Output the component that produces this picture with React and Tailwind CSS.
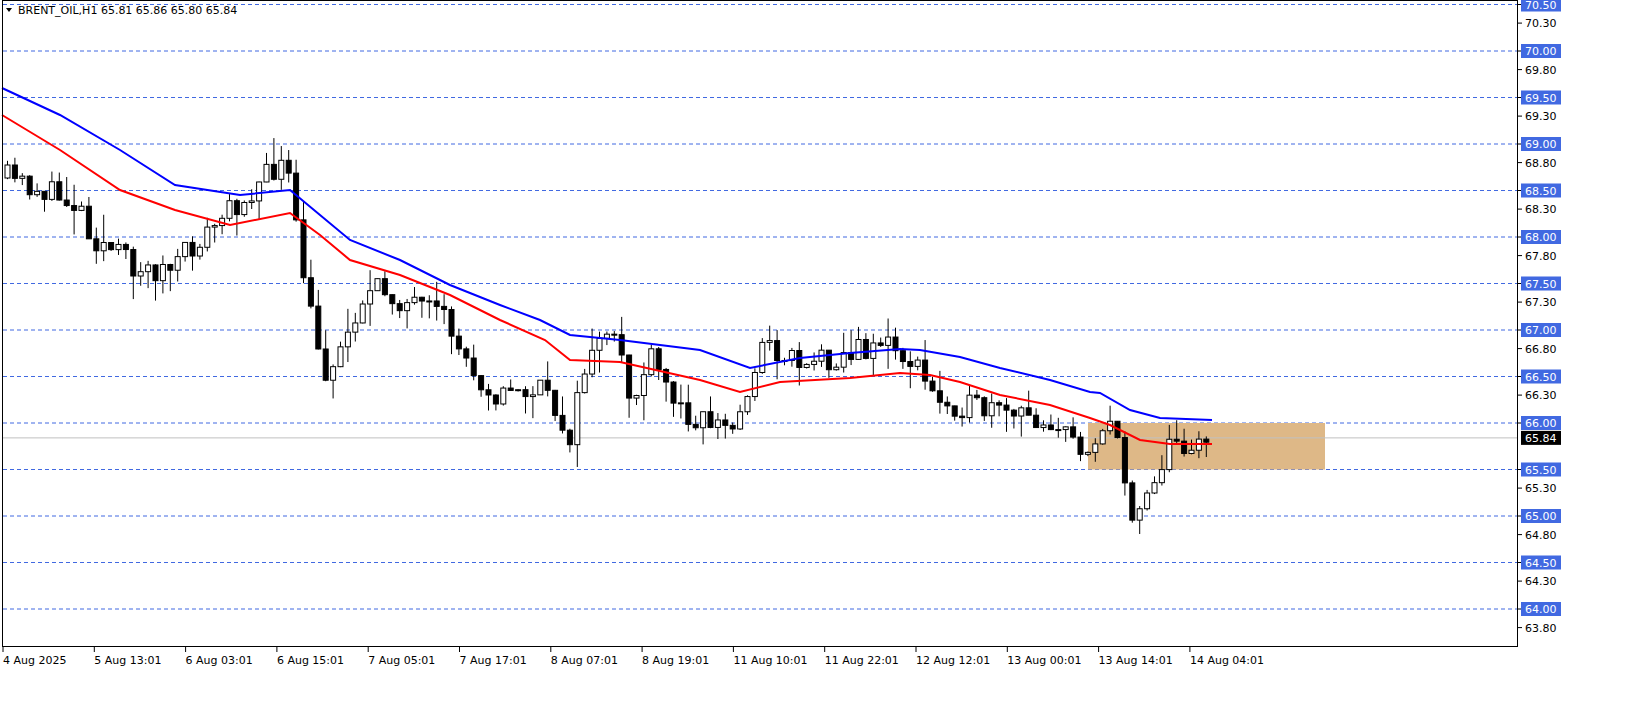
import React from 'react';

const Y = (p) => 51 + (70 - p) * 93;

const keys = [
  [7, 178], [80, 205], [90, 235], [140, 270], [170, 270], [200, 240], [240, 200], [285, 160],
  [300, 260], [322, 375], [340, 350], [360, 300], [380, 290], [420, 310], [445, 320], [465, 360],
  [495, 395], [540, 390], [570, 435], [590, 345], [620, 345], [630, 405], [650, 360], [680, 410],
  [735, 430], [760, 345], [800, 360], [850, 355], [880, 340], [915, 365], [935, 400], [960, 405],
  [1000, 415], [1050, 420], [1080, 450], [1110, 420], [1122, 470], [1130, 515], [1150, 485],
  [1170, 445], [1212, 438],
];

const blue = [[2,88],[60,115],[120,150],[175,185],[240,195],[290,190],[320,215],[350,240],[400,260],[450,285],[500,305],[540,320],[570,335],[620,340],[700,350],[750,368],[800,358],[850,353],[900,349],[920,350],[960,357],[1000,368],[1050,380],[1090,392],[1100,393],[1130,410],[1160,418],[1212,420]];
const red = [[2,115],[60,150],[120,190],[175,210],[230,225],[290,213],[320,235],[350,260],[400,275],[450,295],[500,320],[545,340],[570,360],[620,362],[700,380],[740,392],[780,382],[850,378],[900,373],[930,375],[960,382],[1000,395],[1050,405],[1090,418],[1110,425],[1140,440],[1170,444],[1212,444]];

function interp(x) {
  for (let i = 0; i < keys.length - 1; i++) {
    const [x0, y0] = keys[i], [x1, y1] = keys[i + 1];
    if (x >= x0 && x <= x1) return y0 + ((y1 - y0) * (x - x0)) / (x1 - x0);
  }
  return keys[keys.length - 1][1];
}

let seed = 11;
const rnd = () => { seed = (seed * 16807) % 2147483647; return seed / 2147483647; };

const candles = [];
let prev = 178;
for (let x = 7; x <= 1212; x += 7.4) {
  const c = interp(x) + (rnd() - 0.5) * 26;
  const o = prev;
  const hi = Math.min(o, c) - rnd() * rnd() * 30;
  const lo = Math.max(o, c) + rnd() * rnd() * 30;
  candles.push({ x, o, c, hi, lo });
  prev = c;
}

const pts = (a) => a.map(([x, y]) => `${x},${y}`).join(' ');

const levels = [];
for (let p = 70.5; p >= 63.79; p -= 0.5) levels.push(Math.round(p * 100) / 100);
const minors = levels.map((p) => Math.round((p - 0.2) * 100) / 100).filter((p) => p > 63.7 && p !== 65.8);

const times = ['4 Aug 2025', '5 Aug 13:01', '6 Aug 03:01', '6 Aug 15:01', '7 Aug 05:01', '7 Aug 17:01', '8 Aug 07:01', '8 Aug 19:01', '11 Aug 10:01', '11 Aug 22:01', '12 Aug 12:01', '13 Aug 00:01', '13 Aug 14:01', '14 Aug 04:01'];

export default function App() {
  return (
    <div className="w-[1651px] h-[705px] bg-white overflow-hidden" style={{ fontFamily: '"DejaVu Sans", sans-serif' }}>
      <svg width="1651" height="705" className="block" fontFamily="DejaVu Sans, sans-serif" fontSize="11">
        {levels.map((p) => (
          <line key={p} x1="3" x2="1518" y1={Y(p)} y2={Y(p)} stroke="#4169e1" strokeDasharray="4 3" />
        ))}
        <rect x="1088" y={Y(66)} width="237" height={Y(65.5) - Y(66)} fill="#deb887" />
        <line x1="3" x2="1518" y1={Y(65.84)} y2={Y(65.84)} stroke="#c0c0c0" />
        {candles.map((k, i) => {
          const bull = k.c < k.o;
          const top = Math.min(k.o, k.c), h = Math.max(Math.abs(k.o - k.c), 1);
          return (
            <g key={i}>
              <line x1={k.x + 0.5} x2={k.x + 0.5} y1={k.hi} y2={k.lo} stroke="#000" />
              <rect x={k.x - 2} y={top} width="5" height={h} fill={bull ? '#fff' : '#000'} stroke="#000" />
            </g>
          );
        })}
        <polyline points={pts(blue)} fill="none" stroke="#0000ff" strokeWidth="2" />
        <polyline points={pts(red)} fill="none" stroke="#ff0000" strokeWidth="2" />
        <rect x="2.5" y="0.5" width="1515" height="646" fill="none" stroke="#000" />
        <path d="M6 8 L12 8 L9 12 Z" fill="#000" />
        <text x="18" y="14" fill="#000">BRENT_OIL,H1  65.81 65.86 65.80 65.84</text>
        {levels.map((p) => (
          <g key={p}>
            <line x1="1518" x2="1522" y1={Y(p)} y2={Y(p)} stroke="#000" />
            <rect x="1521" y={Y(p) - 7} width="40" height="14" fill="#4169e1" />
            <text x="1525" y={Y(p) + 4} fill="#fff">{p.toFixed(2)}</text>
          </g>
        ))}
        {minors.map((p) => (
          <g key={p}>
            <line x1="1518" x2="1522" y1={Y(p)} y2={Y(p)} stroke="#000" />
            <text x="1525" y={Y(p) + 4} fill="#000">{p.toFixed(2)}</text>
          </g>
        ))}
        <rect x="1521" y={Y(65.84) - 7} width="40" height="14" fill="#000" />
        <text x="1525" y={Y(65.84) + 4} fill="#fff">65.84</text>
        {times.map((t, i) => (
          <g key={t}>
            <line x1={3 + i * 91.3} x2={3 + i * 91.3} y1="647" y2="652" stroke="#000" />
            <text x={3 + i * 91.3} y="664" fill="#000">{t}</text>
          </g>
        ))}
      </svg>
    </div>
  );
}
